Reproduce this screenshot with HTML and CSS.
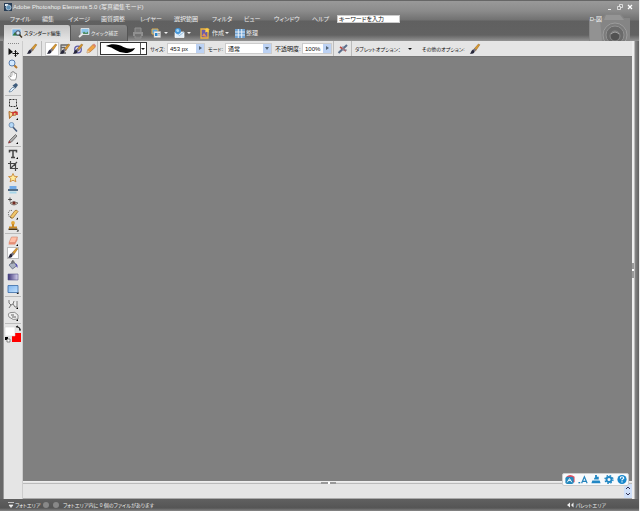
FILE: index.html
```
<!DOCTYPE html>
<html lang="ja">
<head>
<meta charset="utf-8">
<title>Adobe Photoshop Elements 5.0</title>
<link rel="stylesheet" href="styles.css">
</head>
<body>
<svg class="defs" aria-hidden="true">
  <defs>
    <linearGradient id="purple"><stop offset="0" stop-color="#3d3478"/><stop offset="1" stop-color="#d8d4f0"/></linearGradient>
    <linearGradient id="blue" x2="1" y2="1"><stop offset="0" stop-color="#7fb4ee"/><stop offset="1" stop-color="#c2e2ff"/></linearGradient>
  </defs>
  <symbol id="brush" viewBox="0 0 12 12"><path d="M4.500 6.500 9.500 1l1.300.8L6.500 8z" fill="#dc9a2c" stroke="#8a5a18" stroke-width=".5"/><path d="M5.800 5.200 7.200 6.700 5.700 8.500 4 7z" fill="#778"/><path d="M4 6.600 5.700 8.400C5 10.500 3 11 .8 10.800 2.400 9.700 2 7.500 4 6.600" fill="#27273a"/></symbol>
  <symbol id="photo" viewBox="0 0 12 12"><path d="M1 2h9v7H1z" fill="#78b2e2" stroke="#eee" stroke-width=".7"/><path d="M1.500 8.500 4 5l2 2 2-2 2 3.500z" fill="#347b3a"/><circle cx="7" cy="6" r="2.200" fill="#cfe8fa" stroke="#445"/><path d="m8.500 7.700 2.500 2.800" stroke="#443322" stroke-width="1.500"/></symbol>
  <symbol id="fix" viewBox="0 0 12 12"><path d="M3 1.500h8v6H3z" fill="#8cc4ea" stroke="#eee" stroke-width=".8"/><path d="M3.500 7 6 4.500 8 6l2-1.500V7z" fill="#4f8d62"/><path d="m1 10 4-3.500" stroke="#e8e8e8" stroke-width="1.800"/></symbol>
  <symbol id="globe" viewBox="0 0 12 12"><path d="M2 5h9v5.500H2z" fill="#dfeefa" stroke="#fff" stroke-width=".7"/><path d="m2 5 4.500 3.500L11 5" fill="none" stroke="#78a8d0" stroke-width=".7"/><circle cx="5" cy="4" r="3" fill="#4396da"/><path d="M3 3q2-2 3 0t-2 2z" fill="#a5d5f4"/></symbol>
</svg>
<div class="app">
  <header class="head">
    <div class="titlebar">
      <svg class="i10" viewBox="0 0 10 10"><path d="M1 1h8v8H1z" fill="#263c55"/><path d="M2 2h3v2H2z" fill="#e4edf4"/><circle cx="5.500" cy="5.500" r="2.500" fill="#5f91b6" stroke="#cfdce6" stroke-width=".7"/></svg>
      <h1>Adobe Photoshop Elements 5.0 (写真編集モード)</h1>
      <div class="wins">
        <button aria-label="最小化"><svg viewBox="0 0 8 8"><path d="M2 6.500h3" stroke="#eee"/></svg></button>
        <button aria-label="元に戻す"><svg viewBox="0 0 8 8"><path d="M3.500 3.500v-2h3v3h-2M1.500 3.500h3v3h-3z" fill="none" stroke="#eee" stroke-width=".8"/></svg></button>
        <button aria-label="閉じる"><svg viewBox="0 0 8 8"><path d="m2 2 4 4M6 2 2 6" stroke="#fff" stroke-width="1.200"/></svg></button>
      </div>
    </div>
    <nav class="menu">
      <a href="#">ファイル</a><a href="#">編集</a><a href="#">イメージ</a><a href="#">画質調整</a><a href="#">レイヤー</a><a href="#">選択範囲</a><a href="#">フィルタ</a><a href="#">ビュー</a><a href="#">ウィンドウ</a><a href="#">ヘルプ</a>
      <input aria-label="キーワード" value="キーワードを入力">
    </nav>
    <div class="tabs">
      <button class="tab on"><svg class="i12"><use href="#photo"/></svg>スタンダード編集</button>
      <button class="tab"><svg class="i12"><use href="#fix"/></svg>クイック補正</button>
      <button class="act print" aria-label="プリント"><svg class="i12" viewBox="0 0 12 12"><path d="M3 5V1h6v4M3 8v3h6V8" fill="#777" stroke="#929292"/><path d="M1 5h10v4H1z" fill="#909090"/><path d="M3 8h6" stroke="#555"/></svg></button>
      <button class="act" aria-label="共有"><svg class="i12" viewBox="0 0 12 12"><path d="M2 2h6v5H2z" fill="#5ba5df" stroke="#e5b14f"/><path d="M4 4.500h6.500V10.500H4z" fill="#eee" stroke="#bbb" stroke-width=".5"/><path d="M5 6h2.500v3H5z" fill="#2d86c9"/><path d="M8 6.500h2M8 8h2" stroke="#777" stroke-width=".6"/></svg><i class="caret"></i></button>
      <button class="act" aria-label="オンライン"><svg class="i12"><use href="#globe"/></svg><i class="caret"></i></button>
      <button class="act make"><svg class="i12" viewBox="0 0 12 12"><path d="M2 2h7v9H2z" fill="#6b5da7" stroke="#efb43d" stroke-width="1.300"/><path d="m8 .500.8 1.700 2 .1-1.400 1.300.5 2L8 4.700 6.100 5.600l.5-2-1.400-1.300 2-.1z" fill="#ffd349"/><path d="M3 9 5 6l3 4z" fill="#e68d55"/></svg>作成<i class="caret"></i></button>
      <button class="act sort"><svg class="i12" viewBox="0 0 12 12"><path d="M1 2h10v9H1z" fill="#6fa3d4"/><path d="M1 5h10M1 8h10M4.300 2v9M7.700 2v9" stroke="#f0f5fa" stroke-width=".9"/></svg>整理</button>
    </div>
    <svg class="camera" viewBox="0 0 44 28"><path d="M1 6h12l5-5h15l3 4h6v23H1z" fill="#858585"/><path d="M2 7h10l2 21H2z" fill="#929292"/><path d="M18 2h14l4 5H16z" fill="#959595"/><circle cx="27" cy="22" r="12" fill="#7c7c7c" stroke="#9c9c9c"/><circle cx="27" cy="22" r="9" fill="#6a6a6a" stroke="#929292"/><circle cx="27" cy="23" r="5" fill="#525252" stroke="#8a8a8a"/><path d="M23 21q4-4 8 0" stroke="#aaa" fill="none"/></svg>
    <span class="mini">D-図</span>
  </header>
  <main class="work">
    <aside class="tools">
      <i class="grip"></i>
      <button aria-label="移動"><svg viewBox="0 0 12 12"><path d="M1.500 2v7L6 6z" fill="#111"/><path d="M8.500 4.500v6M5.500 7.500h6M7.500 5.500l1-1 1 1M7.500 9.500l1 1 1-1M10.500 6.500l1 1-1 1" fill="none" stroke="#111"/></svg></button>
      <button aria-label="ズーム"><svg viewBox="0 0 12 12"><path d="m7 7 3 3" stroke="#b77a2f" stroke-width="2"/><circle cx="5" cy="5" r="3" fill="#d2e9ff" stroke="#597eaf"/></svg></button>
      <button aria-label="手のひら"><svg viewBox="0 0 12 12"><path d="M4 10 1.500 6.500l1-.7L4 7V2.500h1.300V1.500h1.400v1H8v1h1.500V7L8.500 10z" fill="#fff" stroke="#888" stroke-width=".8"/><path d="M5.500 3v2.500M7.300 3v2.500" stroke="#aaa" stroke-width=".5"/></svg></button>
      <button aria-label="スポイト"><svg viewBox="0 0 12 12"><path d="m2 10 1-2 3-3 1.500 1.500-3 3z" fill="#dff0ff" stroke="#567693" stroke-width=".7"/><path d="m5.500 3.500 3 3L11 3 9 1z" fill="#3f5d7d"/></svg></button>
      <hr>
      <button aria-label="長方形選択"><svg viewBox="0 0 12 12"><path d="M2.500 2.500h7v7h-7z" fill="none" stroke="#333" stroke-dasharray="2 1"/><path d="M11 10v2H9z"/></svg></button>
      <button aria-label="なげなわ"><svg viewBox="0 0 12 12"><path d="m2.500 9.500-.5-7 4 1.500 3-2v4L5 6.500z" fill="#f5dc9a" stroke="#ad6a28"/><path d="M6 6V3.500h4V6" fill="none" stroke="#cf3131" stroke-width="1.500"/><path d="M11 9v2H9z"/></svg></button>
      <button aria-label="マジックワンド"><svg viewBox="0 0 12 12"><path d="m5 5 5 5.500" stroke="#43597a" stroke-width="1.600"/><circle cx="4.500" cy="4" r="2.500" fill="#b2d7f7" stroke="#7996b7"/></svg></button>
      <button aria-label="選択ブラシ"><svg viewBox="0 0 12 12"><path d="m1.500 10 1-2.500L8.500 1.500 10 3 4.500 9z" fill="#aaa" stroke="#555" stroke-width=".7"/><path d="m2 8 2 1-2.500 1.500z" fill="#a33"/><path d="M11 9v2H9z"/></svg></button>
      <hr>
      <button aria-label="文字"><svg viewBox="0 0 12 12"><path d="M2.500 4.500v-2h7v2M6 2.500v7M4 9.500h4" fill="none" stroke="#444" stroke-width="1.500"/><path d="M11 9v2H9z"/></svg></button>
      <button aria-label="切り抜き"><svg viewBox="0 0 12 12"><path d="M3.500 1v7.500H11M1 3.500h7.500V11M3.500 8.500 10 2" fill="none" stroke="#444" stroke-width="1.200"/></svg></button>
      <button aria-label="型抜き"><svg viewBox="0 0 12 12"><path d="m6 1.500 1.300 2.800 3.200.3-2.400 2 .8 3.200L6 8.200 3.100 9.800l.8-3.200-2.400-2 3.200-.3z" fill="#ffeb9c" stroke="#c98a3c" stroke-width=".9"/></svg></button>
      <button aria-label="角度補正"><svg viewBox="0 0 12 12"><path d="M2.500 2h7v3h-7z" fill="#72aae6"/><path d="M1 6h10" stroke="#246" stroke-width="1.500"/><path d="M2.500 7.500h7v2h-7z" fill="#a5d5e9"/></svg></button>
      <button aria-label="赤目修正"><svg viewBox="0 0 12 12"><path d="M3 1.500v4M1 3.500h4" stroke="#333" stroke-width=".8"/><path d="M3 7q3.500-3 8 0-4 4-8 0" fill="#dcc7b5" stroke="#555" stroke-width=".7"/><circle cx="7" cy="7" r="1.600" fill="#702b25"/></svg></button>
      <button aria-label="修復"><svg viewBox="0 0 12 12"><path d="m3 9 5-6.500q2-1 3 1L6 10q-2 1-3-1" fill="#f1c669" stroke="#976622" stroke-width=".7"/><path d="M5 2.500Q1 2 1.500 6t3 3.500" fill="none" stroke="#555" stroke-dasharray="1"/><path d="M11 9.500v2H9z"/></svg></button>
      <button aria-label="スタンプ"><svg viewBox="0 0 12 12"><circle cx="6" cy="3" r="1.900" fill="#e4a738"/><path d="M5 4h2v2.500h3v2H2v-2h3z" fill="#c98925"/><path d="M1.500 8.500h9v1.500h-9z" fill="#4c3412"/><path d="M11.500 9.500v2h-2z"/></svg></button>
      <hr>
      <button aria-label="消しゴム"><svg viewBox="0 0 12 12"><path d="M4.500 2h6L8 7.500H2z" fill="#ffc0a8" stroke="#cc8064" stroke-width=".6"/><path d="M2 7.500h6l2.500-5v2.500L8 9.500H1.500z" fill="#e78c73"/><path d="M11 9v2H9z"/></svg></button>
      <button class="sel" aria-label="ブラシ"><svg><use href="#brush"/></svg></button>
      <button aria-label="塗りつぶし"><svg viewBox="0 0 12 12"><path d="m2 6 4-3.500 4 4L5.500 10z" fill="#aab2c0" stroke="#555f75" stroke-width=".7"/><path d="M5 5V2q1-1 2 .5v2" fill="none" stroke="#555"/><path d="M8 4q3 1 2.500 5Q9 8 8 4" fill="#504bb5"/></svg></button>
      <button aria-label="グラデーション"><svg viewBox="0 0 12 12"><path d="M1 3h10v6H1z" fill="url(#purple)" stroke="#555587" stroke-width=".6"/></svg></button>
      <button aria-label="シェイプ"><svg viewBox="0 0 12 12"><path d="M1 2.500h10v7H1z" fill="url(#blue)" stroke="#386ba7" stroke-width=".8"/><path d="M11.500 9v2h-2z"/></svg></button>
      <hr>
      <button aria-label="ぼかし"><svg viewBox="0 0 12 12"><path d="M2 2v3l2 2 2-1 1-3M4 7l-2 3M6 6l2 3h2V3" fill="#eee" stroke="#777"/><path d="M11 9v2H9z"/></svg></button>
      <button aria-label="スポンジ"><svg viewBox="0 0 12 12"><path d="M2 7Q0 3 4 2.500q4-1.500 7 2.500v4q-5 2-9-2" fill="#eee" stroke="#777" stroke-width=".8"/><path d="M4 5h3M5 7h4" stroke="#666"/><path d="M11 9v2H9z"/></svg></button>
      <hr>
      <svg class="colors" viewBox="0 0 18 18"><path d="M8 8h9v9H8z" fill="red"/><path d="M1 2h10v9H1z" fill="#fff" stroke="#ccc" stroke-width=".5"/><path d="M13 2q3 0 3 3M12 2l2-1M15 5h2" fill="none" stroke="#222" stroke-width="1.200"/><path d="M1 12h3v3H1z"/><path d="M3 14h3v3H3z" fill="#fff" stroke="#444" stroke-width=".6"/></svg>
    </aside>
    <section class="right">
      <form class="opts">
        <span class="cell first"><svg class="i12"><use href="#brush"/></svg></span>
        <span class="cell brushes">
          <button type="button" class="on" aria-label="ブラシ"><svg class="i12"><use href="#brush"/></svg></button>
          <button type="button" aria-label="印象派ブラシ"><svg class="i12" viewBox="0 0 12 12"><path d="M1.500 2h8M2 4.500h4M2 2v8h5" stroke="#666" fill="none" stroke-width="1.300"/><use href="#brush"/></svg></button>
          <button type="button" aria-label="色の置き換え"><svg class="i12" viewBox="0 0 12 12"><circle cx="6" cy="6.500" r="3.300" fill="#dcdcf4" stroke="#5c5aa4" stroke-width="1.300"/><use href="#brush"/></svg></button>
          <button type="button" aria-label="鉛筆"><svg class="i12" viewBox="0 0 12 12"><path d="m2 10 .5-3L8 1.500 10.500 4 5 9z" fill="#efa344" stroke="#ad6a2c" stroke-width=".6"/><path d="m8 1.500 1-1 2 2-1 1.500z" fill="#d67f76"/><path d="m2.500 7 2.500 2-3 1z" fill="#e6caa1"/></svg></button>
        </span>
        <button type="button" class="stroke" aria-label="ブラシの種類"><svg viewBox="0 0 40 11"><path d="M5 3C11 0 18 1 23 4q6 3 12 1-2 4-8 5-7 .5-12-3Q11 4 5 3"/></svg><i class="caret"></i></button>
        <label class="f1" for="size">サイズ:</label>
        <span class="box size"><input id="size" value="453 px"><i class="drop side"></i></span>
        <label class="f1" for="mode">モード:</label>
        <span class="box mode"><select id="mode"><option>通常</option></select><i class="drop"></i></span>
        <label class="f2" for="opa">不透明度:</label>
        <span class="box opa"><input id="opa" value="100%"><i class="drop side"></i></span>
        <button type="button" class="air" aria-label="エアブラシ"><svg class="i12" viewBox="0 0 12 12"><path d="M1.500 10 10 2" stroke="#5b6f8c" stroke-width="2"/><path d="m3 4 6 4" stroke="#b84a43" stroke-width="1.600"/><path d="M6 3v4h4" fill="none" stroke="#8394ac"/></svg></button>
        <span class="f3">タブレットオプション：</span>
        <i class="caret dark"></i>
        <span class="f4">その他のオプション:</span>
        <svg class="i12"><use href="#brush"/></svg>
      </form>
      <div class="canvas"></div>
      <div class="bin">
        <i class="handle"></i>
        <div class="spin"><button aria-label="上"><svg viewBox="0 0 8 7"><path d="m2 5 2-2 2 2" fill="none" stroke="#335"/></svg></button><button aria-label="下"><svg viewBox="0 0 8 7"><path d="m2 2 2 2 2-2" fill="none" stroke="#335"/></svg></button></div>
      </div>
      <div class="ime">
        <svg viewBox="0 0 12 12"><path d="M2 3q4-4 9 0v6H5z" fill="#e54c5b"/><rect x="1" y="3" width="9" height="8" rx="2" fill="#2588bd"/><path d="m3 9 2.500-4L8 9M4 7h3" stroke="#fff" fill="none"/></svg>
        <svg viewBox="0 0 12 12"><path d="M1 9.500h2" stroke="#2584bd" stroke-width="1.500"/><path d="M4.500 10 7.500 3l3 7M5.500 8h4" fill="none" stroke="#2584bd" stroke-width="1.300"/></svg>
        <svg viewBox="0 0 12 12"><path d="M5 1h2v2h2v3H4V4h1zM2 7h8l1 3H1z" fill="#2187c4"/></svg>
        <svg viewBox="0 0 12 12"><circle cx="6" cy="6" r="2.700" fill="none" stroke="#2187c4" stroke-width="2"/><circle cx="6" cy="6" r="4.300" fill="none" stroke="#2187c4" stroke-width="1.500" stroke-dasharray="1.700"/></svg>
        <svg viewBox="0 0 12 12"><circle cx="6" cy="6" r="5" fill="#1787cb"/><path d="M4.300 5Q4 3 6 3t2 1.700Q7.500 5.500 6 6.200v1M6 8v1.200" fill="none" stroke="#fff" stroke-width="1.200"/></svg>
      </div>
    </section>
    <div class="edge"><i></i></div>
  </main>
  <footer class="foot">
    <svg viewBox="0 0 8 8"><path d="M1 1.500h6M2 4h4L4 6.500z" fill="#eee" stroke="#eee" stroke-width=".7"/></svg>
    <span class="pa">フォトエリア</span>
    <i class="dot"></i><i class="dot"></i>
    <span>フォトエリア内に 0 個のファイルがあります</span>
    <span class="palette"><svg viewBox="0 0 8 8"><path d="M4 1.500v5L1 4zM7.500 1.500v5L5 4z" fill="#eee"/></svg>パレットエリア</span>
  </footer>
</div>
</body>
</html>
```
FILE: styles.css
```
* { box-sizing: border-box; }
body { margin: 0; font: 6px/8px "Liberation Sans", "Noto Sans CJK JP", sans-serif; font-feature-settings: "palt"; color: #111; }
button, input, select { font: inherit; font-feature-settings: inherit; color: inherit; margin: 0; padding: 0; border: 0; background: none; border-radius: 0; }
button, a, label, span { white-space: nowrap; }
.defs { position: absolute; width: 0; height: 0; }
svg { display: block; flex: none; }
.i12 { width: 12px; height: 12px; }
.i10 { width: 10px; height: 10px; }
.app { display: flex; flex-direction: column; height: 100vh; background: #686868; border-right: 1px solid #eee; }
.head { position: relative; height: 41px; flex: none; padding-left: 3px; border-top: 1px solid #666; background: linear-gradient(#999 0, #8b8b8b 10px, #717171 19px, #606060 20px, #626262 34px, #939393 40px); color: #eee; }
.titlebar { display: flex; align-items: center; height: 12px; padding-right: 5px; }
h1 { margin: 0 auto 0 0; font-size: 6px; line-height: 10px; font-weight: 400; white-space: nowrap; }
.wins { display: flex; gap: 2px; }
.wins button, .wins svg { width: 8px; height: 8px; }
.menu { display: grid; grid-template-columns: 32px 26px 33px 39px 34px 38px 32px 30px 38px 25px 63px; height: 11px; padding-left: 7px; align-items: center; }
.menu a { color: inherit; text-decoration: none; }
.menu input { height: 8px; background: #fff; color: #111; padding-left: 1px; border: 1px solid #ccc; line-height: 6px; }
.tabs { display: flex; align-items: center; height: 17px; padding-left: 1px; }
.tab { display: flex; align-items: center; height: 16px; width: 57px; padding-left: 7px; gap: 1px; color: #eee; background: linear-gradient(#888, #717171); border-right: 1px solid #555; border-radius: 0 3px 0 0; }
.tab.on { width: 67px; color: #111; background: linear-gradient(#c4c4c4, #e6e6e6); }
.tab, .f1, .f3, .f4, .foot { font-size: 5px; }
.act { display: flex; align-items: center; gap: 2px; padding-right: 5px; }
.print { padding: 0 6px 0 4px; }
.make { gap: 1px; padding-left: 3px; }
.sort { gap: 0; }
.caret { width: 0; height: 0; border: 2px solid transparent; border-top-color: currentColor; border-bottom: 0; flex: none; }
.camera { position: absolute; right: 7px; bottom: 0; width: 44px; height: 28px; }
.mini { position: absolute; right: 37px; top: 14px; }
.work { flex: 1; display: flex; min-height: 0; padding-left: 3px; }
.tools { width: 20px; background: #e5e5e5; border-left: 1px solid #999; border-right: 1px solid #ccc; padding-top: 2px; }
.grip { display: block; width: 11px; margin: 0 0 2px 4px; border-top: 1px dotted #888; }
.tools button { display: block; width: 12px; height: 12px; margin-left: 3px; }
.tools button svg { width: 12px; height: 12px; }
.tools .sel { background: #fff; outline: 1px solid #bbb; outline-offset: -1px; }
.tools hr { border: 0; border-top: 1px solid #bbb; margin: 1px; }
.colors { width: 18px; height: 18px; }
.right { position: relative; flex: 1; min-width: 0; display: flex; flex-direction: column; }
.opts { height: 15px; flex: none; display: flex; align-items: center; background: #e5e5e5; }
.cell { display: flex; align-items: center; height: 15px; border-right: 1px solid #bbb; }
.first { width: 19px; padding-left: 3px; }
.brushes { width: 56px; padding-left: 4px; gap: 1px; }
.brushes .on { background: #fff; outline: 1px solid #ccc; }
.stroke { display: flex; align-items: center; width: 47px; height: 13px; margin: 0 3px 0 2px; background: #fff; border: 1px solid #333; }
.stroke svg { width: 40px; height: 11px; border-right: 1px solid #555; }
.f1 { width: 18px; }
.f2 { width: 28px; }
.f3 { width: 50px; padding-left: 3px; }
.f4 { width: 47px; margin-left: 10px; }
.box { display: flex; height: 9px; background: #fff; outline: 1px solid #ccc; padding-left: 2px; }
.box input, .box select { flex: 1; width: 0; min-width: 0; appearance: none; line-height: 8px; height: 9px; outline: 0; }
.size { width: 36px; margin-right: 4px; }
.mode { width: 45px; margin-right: 4px; }
.opa { width: 28px; }
.drop { position: relative; width: 8px; height: 9px; background: #bcd2f4; pointer-events: none; }
.drop::after { content: ""; position: absolute; left: 2px; top: 3px; border: 2px solid transparent; border-top: 3px solid #567; border-bottom: 0; }
.side::after { left: 3px; top: 2px; border: 2px solid transparent; border-left: 3px solid #567; border-right: 0; }
.air { height: 15px; width: 19px; margin-left: 2px; padding-left: 3px; border: solid #bbb; border-width: 0 1px; }
.dark { margin-left: 6px; }
.canvas { flex: 1; background: #808080; border-top: 1px solid #777; }
.bin { height: 18px; flex: none; display: flex; justify-content: flex-end; align-items: flex-end; position: relative; background: #e5e5e5; border-top: 1px solid #eee; border-bottom: 1px solid #aaa; }
.bin::before { content: ""; position: absolute; left: 0; right: 0; top: 1px; border-top: 1px solid #bbb; }
.handle { position: absolute; left: 49%; top: 0; width: 15px; height: 2px; background: #999 linear-gradient(#fff, #fff) center / 2px 2px no-repeat; }
.spin { display: flex; flex-direction: column; width: 8px; }
.spin button, .spin svg { width: 8px; height: 7px; }
.spin button { background: #cfdff8; }
.ime { position: absolute; right: 3px; bottom: 13px; height: 13px; display: flex; align-items: center; gap: 1px; padding: 0 0 0 1px; background: #f8fafc; border: 1px solid #ccc; border-radius: 2px; }
.ime svg { width: 12px; height: 11px; }
.edge { width: 7px; display: flex; align-items: center; background: linear-gradient(90deg, #eee 2px, #888 3px, #606060); }
.edge i { width: 2px; height: 15px; background: #999 linear-gradient(#fff, #fff) center / 2px 2px no-repeat; }
.foot { height: 12px; flex: none; display: flex; align-items: center; padding: 0 33px 0 7px; background: linear-gradient(#606060, #555 9px, #888); color: #eee; }
.foot svg { width: 8px; height: 8px; }
.pa { width: 28px; }
.dot { width: 6px; height: 6px; margin-right: 4px; border-radius: 50%; background: #888; }
.palette { display: flex; gap: 2px; margin-left: auto; }
```
